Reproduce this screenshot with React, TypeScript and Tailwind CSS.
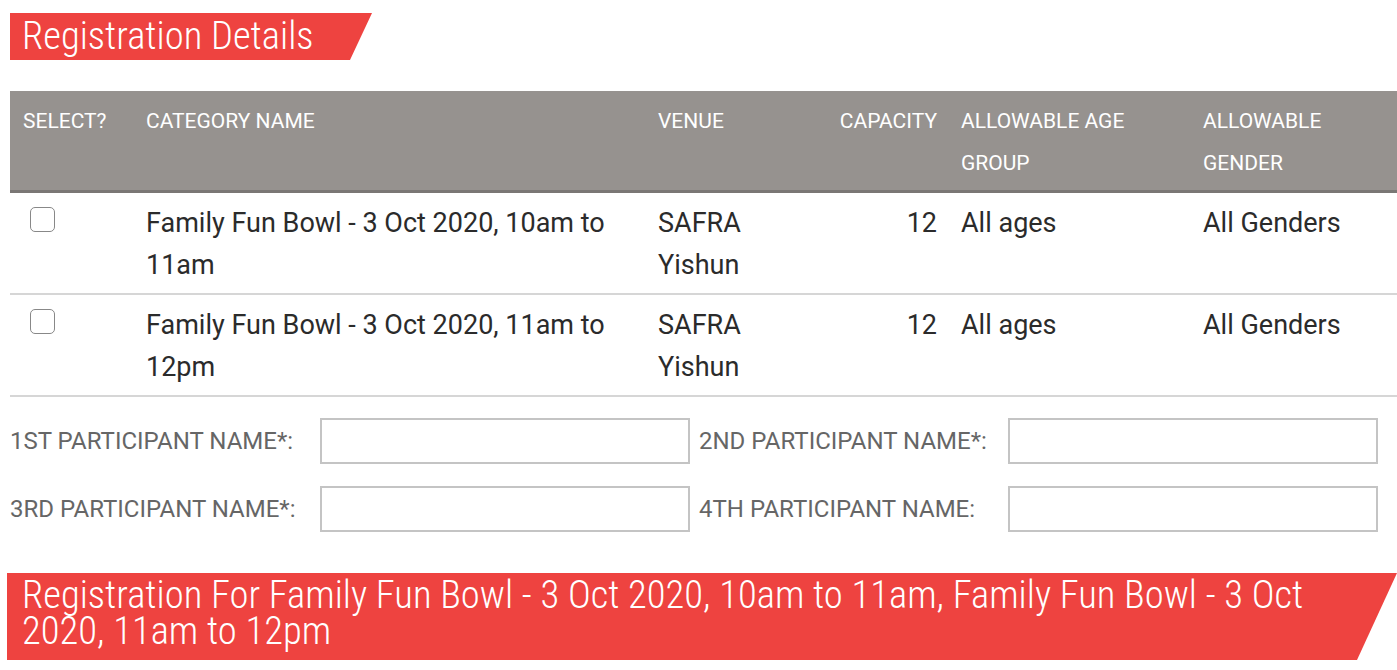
const rows = [
  { name: 'Family Fun Bowl - 3 Oct 2020, 10am to 11am', venue: 'SAFRA Yishun', capacity: 12, age: 'All ages', gender: 'All Genders' },
  { name: 'Family Fun Bowl - 3 Oct 2020, 11am to 12pm', venue: 'SAFRA Yishun', capacity: 12, age: 'All ages', gender: 'All Genders' },
]

const Banner = ({ children, className }: { children: React.ReactNode; className?: string }) => (
  <h2
    className={`bg-[#ee4340] text-white font-light text-[38.6px] leading-[36px] font-['Roboto_Condensed',_'Roboto',_sans-serif] ${className ?? ''}`}
  >
    {children}
  </h2>
)

const App = () => {
  return (
    <div className="min-h-screen bg-white font-['Roboto',_'Liberation_Sans',_sans-serif] pt-[13px]">
      <div className="pl-[10px]">
        <Banner className="w-[362px] h-[47px] pl-[12px] pt-[5px] [clip-path:polygon(0_0,100%_0,calc(100%-22px)_100%,0_100%)]">
          Registration Details
        </Banner>
      </div>

      <div className="pl-[10px] mt-[31px]">
        <table className="w-full table-fixed border-collapse">
          <colgroup>
            <col className="w-[123px]" />
            <col className="w-[512px]" />
            <col className="w-[155px]" />
            <col className="w-[150px]" />
            <col className="w-[240px]" />
            <col />
          </colgroup>
          <thead>
            <tr className="bg-[#96928f] text-white text-[21px] leading-[42px] uppercase border-b-[3px] border-[#7a7775]">
              <th className="text-left font-normal align-top pl-[13px] pt-[9px] pb-[6px]">Select?</th>
              <th className="text-left font-normal align-top pl-[13px] pt-[9px] pb-[6px]">Category Name</th>
              <th className="text-left font-normal align-top pl-[13px] pt-[9px] pb-[6px]">Venue</th>
              <th className="text-right font-normal align-top pr-[13px] pt-[9px] pb-[6px]">Capacity</th>
              <th className="text-left font-normal align-top pl-[11px] pr-[20px] pt-[9px] pb-[6px]">Allowable Age Group</th>
              <th className="text-left font-normal align-top pl-[13px] pr-[60px] pt-[9px] pb-[6px]">Allowable Gender</th>
            </tr>
          </thead>
          <tbody>
            {rows.map((r) => (
              <tr key={r.name} className="border-b-2 border-[#d6d6d6] text-[#2b2b2b] text-[27px] leading-[42px]">
                <td className="align-top pl-[20px] pt-[14px]">
                  <input type="checkbox" className="appearance-none block w-[25px] h-[25px] rounded-[5px] border border-[#888] bg-white" />
                </td>
                <td className="align-top pl-[13px] pt-[9px] pb-[7px] pr-[20px]">{r.name}</td>
                <td className="align-top pl-[13px] pt-[9px] pb-[7px] pr-[40px]">{r.venue}</td>
                <td className="align-top text-right pr-[13px] pt-[9px] pb-[7px]">{r.capacity}</td>
                <td className="align-top pl-[11px] pt-[9px] pb-[7px]">{r.age}</td>
                <td className="align-top pl-[13px] pt-[9px] pb-[7px]">{r.gender}</td>
              </tr>
            ))}
          </tbody>
        </table>
      </div>

      <div className="pl-[10px] mt-[21px] grid grid-cols-[310px_370px_318px_370px] gap-y-[22px] items-center text-[24px] text-[#666] uppercase">
        <label>1st Participant Name*:</label>
        <input className="h-[46px] border-2 border-[#c4c4c4] bg-white" />
        <label className="pl-[9px]">2nd Participant Name*:</label>
        <input className="h-[46px] border-2 border-[#c4c4c4] bg-white" />
        <label>3rd Participant Name*:</label>
        <input className="h-[46px] border-2 border-[#c4c4c4] bg-white" />
        <label className="pl-[9px]">4th Participant Name:</label>
        <input className="h-[46px] border-2 border-[#c4c4c4] bg-white" />
      </div>

      <div className="pl-[7px] mt-[41px]">
        <Banner className="pl-[15px] pr-[80px] pt-[4px] pb-[11px] [clip-path:polygon(0_0,100%_0,calc(100%-40px)_100%,0_100%)]">
          Registration For Family Fun Bowl - 3 Oct 2020, 10am to 11am, Family Fun Bowl - 3 Oct 2020, 11am to 12pm
        </Banner>
      </div>
    </div>
  )
}

export default App
